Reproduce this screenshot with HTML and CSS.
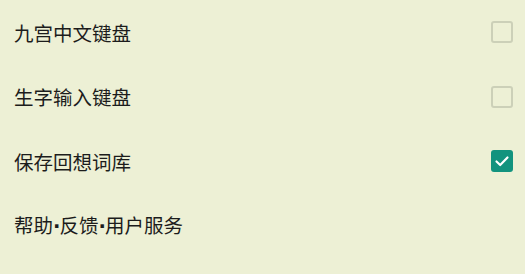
FILE: index.html
```html
<!DOCTYPE html>
<html lang="zh-CN">

<head>
    <meta charset="UTF-8">
    <meta name="viewport" content="width=device-width, initial-scale=1.0">
    <title>键盘设置</title>
    <link rel="stylesheet" href="styles.css">
</head>

<body>
    <ul class="settings">
        <li class="row">
            <span class="label">九宫中文键盘</span>
            <span class="box"></span>
        </li>
        <li class="row">
            <span class="label">生字输入键盘</span>
            <span class="box"></span>
        </li>
        <li class="row">
            <span class="label">保存回想词库</span>
            <span class="box checked">
                <svg viewBox="0 0 22 22" width="22" height="22">
                    <path d="M5.5 11.5 L9.2 15 L16.5 7.5" fill="none" stroke="#fff" stroke-width="2.2" stroke-linecap="round" stroke-linejoin="round" />
                </svg>
            </span>
        </li>
        <li class="row">
            <span class="label">帮助<span class="dot">·</span>反馈<span class="dot">·</span>用户服务</span>
        </li>
    </ul>
</body>

</html>
```

FILE: styles.css
```css
body {
    margin: 0;
    background-color: #edf0d5;
    font-family: "Noto Sans CJK SC", "Noto Sans", sans-serif;
    color: #1c1c1c;
}

.settings {
    list-style: none;
    margin: 0;
    padding: 0;
}

.row {
    display: flex;
    align-items: center;
    justify-content: space-between;
    height: 64.5px;
    padding: 0 12px 0 14px;
}

.label {
    font-size: 19.5px;
    line-height: 1;
}

.dot {
    font-family: "DejaVu Sans", sans-serif;
    font-weight: bold;
    letter-spacing: -1px;
}

.box {
    box-sizing: border-box;
    width: 22px;
    height: 22px;
    border: 2px solid #ccd0b8;
    border-radius: 3px;
}

.box.checked {
    border: none;
    background-color: #12937e;
}

.box svg {
    display: block;
}
```
